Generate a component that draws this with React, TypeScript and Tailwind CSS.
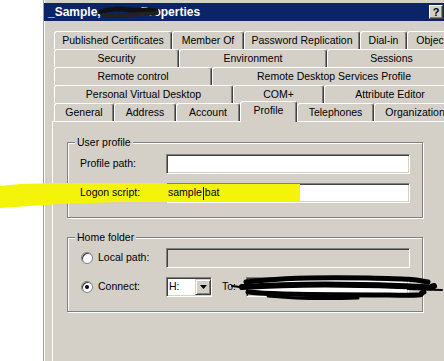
import React from 'react';

type TabDef = { label: string; w: string; active?: boolean };

const rows: TabDef[][] = [
  [
    { label: 'Published Certificates', w: 'w-[118px]' },
    { label: 'Member Of', w: 'w-[72px]' },
    { label: 'Password Replication', w: 'w-[116px]' },
    { label: 'Dial-in', w: 'w-[47px]' },
    { label: 'Object', w: 'w-[49px]' },
  ],
  [
    { label: 'Security', w: 'w-[125px]' },
    { label: 'Environment', w: 'w-[148px]' },
    { label: 'Sessions', w: 'w-[129px]' },
  ],
  [
    { label: 'Remote control', w: 'w-[158px]' },
    { label: 'Remote Desktop Services Profile', w: 'w-[244px]' },
  ],
  [
    { label: 'Personal Virtual Desktop', w: 'w-[179px]' },
    { label: 'COM+', w: 'w-[91px]' },
    { label: 'Attribute Editor', w: 'w-[132px]' },
  ],
  [
    { label: 'General', w: 'w-[60px]' },
    { label: 'Address', w: 'w-[62px]' },
    { label: 'Account', w: 'w-[64px]' },
    { label: 'Profile', w: 'w-[57px]', active: true },
    { label: 'Telephones', w: 'w-[77px]' },
    { label: 'Organization', w: 'w-[82px]' },
  ],
];

const Tab: React.FC<TabDef> = ({ label, w, active }) => (
  <div
    className={`${w} ${
      active ? 'relative z-10 -top-[2px] h-[21px] pb-[3px]' : 'h-[18px]'
    } shrink-0 flex items-center justify-center whitespace-nowrap overflow-hidden bg-[#d4d0c8] border-t border-l border-white border-r border-r-[#404040] rounded-t-[3px] shadow-[inset_-1px_0_0_#808080]`}
  >
    {label}
  </div>
);

const TextBox: React.FC<{ w: string; disabled?: boolean; children?: React.ReactNode }> = ({ w, disabled, children }) => (
  <div
    className={`${w} h-[20px] shrink-0 flex items-center border-t border-l border-t-[#808080] border-l-[#808080] border-b border-r border-white shadow-[inset_1px_1px_0_#404040,inset_-1px_-1px_0_#d4d0c8] ${
      disabled ? 'bg-[#d4d0c8]' : 'bg-white'
    }`}
  >
    {children}
  </div>
);

const Radio: React.FC<{ checked?: boolean }> = ({ checked }) => (
  <div className="w-[12px] h-[12px] shrink-0 rounded-full bg-white border border-[#808080] shadow-[inset_1px_1px_0_#404040] flex items-center justify-center">
    {checked && <div className="w-[4px] h-[4px] rounded-full bg-black" />}
  </div>
);

const GroupBox: React.FC<{ title: string; className?: string; children: React.ReactNode }> = ({ title, className, children }) => (
  <div className={`relative w-[356px] border border-[#808080] shadow-[inset_1px_1px_0_#fff,1px_1px_0_#fff] ${className ?? ''}`}>
    <span className="absolute left-[7px] -top-[7px] px-[2px] leading-[13px] bg-[#d4d0c8]">{title}</span>
    {children}
  </div>
);

export default function App() {
  return (
    <div className="relative w-[444px] h-[361px] overflow-hidden bg-white text-[10.5px] text-black font-['Liberation_Sans',Arial,sans-serif]">
      {/* dialog window */}
      <div className="ml-[43px] w-[421px] h-[400px] pt-[3px] bg-[#d4d0c8] border-l border-[#a0a0a0] shadow-[inset_1px_0_0_#fff]">
        {/* title bar */}
        <div className="h-[18px] flex items-center bg-[#0b2467] pl-[4px] pr-[21px]">
          <span className="text-white font-bold text-[12px] whitespace-pre">_Sample,            Properties</span>
          <div className="ml-auto w-[14px] h-[14px] bg-[#d4d0c8] border-t border-l border-white border-b border-r border-b-[#404040] border-r-[#404040] shadow-[inset_-1px_-1px_0_#808080] flex items-center justify-center font-bold text-[11px] leading-none">
            ?
          </div>
        </div>

        {/* tabs + panel */}
        <div className="mt-[10px] ml-[8px]">
          <div className="pl-[2px]">
            {rows.map((row, i) => (
              <div key={i} className="flex h-[18px]">
                {row.map(t => (
                  <Tab key={t.label} {...t} />
                ))}
              </div>
            ))}
          </div>

          <div className="w-[420px] h-[260px] border-t border-l border-white pl-[14px] pt-[20px]">
            <GroupBox title="User profile" className="pt-[11px] pb-[14px]">
              <div className="flex items-center h-[20px]">
                <span className="ml-[12px] w-[86px] shrink-0">Profile path:</span>
                <TextBox w="w-[244px]" />
              </div>
              <div className="flex items-center h-[20px] mt-[9px]">
                <span className="relative z-10 ml-[12px] w-[86px] shrink-0">Logon script:</span>
                <TextBox w="w-[244px]">
                  <div className="h-full w-[133px] bg-[#f4f40a] flex items-center pl-[1px] whitespace-nowrap">
                    sample<span className="inline-block w-px h-[13px] bg-black mx-[1px]" />bat
                  </div>
                </TextBox>
              </div>
            </GroupBox>

            <GroupBox title="Home folder" className="mt-[19px] pt-[10px] pb-[14px]">
              <div className="flex items-center h-[20px]">
                <div className="ml-[13px] mr-[5px]">
                  <Radio />
                </div>
                <span className="w-[68px] shrink-0">Local path:</span>
                <TextBox w="w-[244px]" disabled />
              </div>
              <div className="flex items-center h-[20px] mt-[9px]">
                <div className="ml-[13px] mr-[5px]">
                  <Radio checked />
                </div>
                <span className="w-[68px] shrink-0">Connect:</span>
                <TextBox w="w-[46px]">
                  <span className="pl-[2px] flex-1">H:</span>
                  <div className="w-[16px] h-[16px] bg-[#d4d0c8] border-t border-l border-[#d4d0c8] border-b border-r border-b-[#404040] border-r-[#404040] shadow-[inset_1px_1px_0_#fff,inset_-1px_-1px_0_#808080] flex items-center justify-center">
                    <svg width="7" height="4" viewBox="0 0 7 4">
                      <path d="M0 0h7L3.5 4z" fill="#000" />
                    </svg>
                  </div>
                </TextBox>
                <span className="ml-[10px] w-[24px] shrink-0">To:</span>
                <TextBox w="w-[163px]" />
              </div>
            </GroupBox>
          </div>
        </div>
      </div>

      {/* title scribble */}
      <svg className="absolute left-[98px] top-[4px]" width="62" height="16" viewBox="0 0 62 16">
        <path d="M3 8 C12 4, 22 5, 32 6 S50 5, 58 7" stroke="#111" strokeWidth="5" fill="none" strokeLinecap="round" />
        <path d="M5 11 C16 13, 30 11, 44 10 S54 10, 59 9" stroke="#222" strokeWidth="4" fill="none" strokeLinecap="round" />
      </svg>

      {/* highlighter */}
      <svg className="absolute left-0 top-[178px] z-[5]" width="167" height="32" viewBox="0 0 167 32">
        <path d="M0 8 L20 6 L60 5 L167 5 L167 24 L120 24 L90 25 L60 26 L30 28 L0 30 Z" fill="#f4f40a" />
      </svg>

      {/* "To" scribble */}
      <svg className="absolute left-[228px] top-[272px]" width="216" height="32" viewBox="0 0 216 32">
        <path d="M18 10 C50 6, 90 5, 140 6 S188 8, 200 10" stroke="#000" strokeWidth="5" fill="none" strokeLinecap="round" />
        <path d="M14 15 C60 12, 120 12, 170 14 S196 16, 206 14" stroke="#000" strokeWidth="6" fill="none" strokeLinecap="round" />
        <path d="M20 20 C60 24, 110 22, 160 23 S186 22, 196 20" stroke="#000" strokeWidth="5" fill="none" strokeLinecap="round" />
        <path d="M40 24 C70 27, 100 27, 130 26" stroke="#000" strokeWidth="3" fill="none" strokeLinecap="round" />
        <path d="M4 14 L20 16" stroke="#000" strokeWidth="2" fill="none" strokeLinecap="round" />
        <path d="M180 17 L214 18" stroke="#000" strokeWidth="2" fill="none" strokeLinecap="round" />
      </svg>
    </div>
  );
}
